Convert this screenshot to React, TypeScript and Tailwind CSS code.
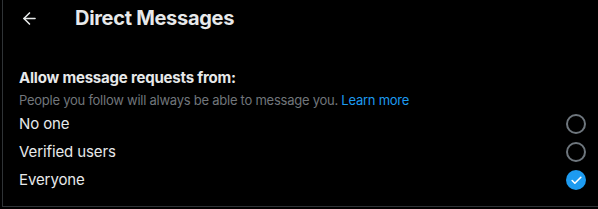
import { ArrowLeft, Check } from "lucide-react";

const OPTIONS = [
  { label: "No one", checked: false },
  { label: "Verified users", checked: false },
  { label: "Everyone", checked: true },
];

export default function App() {
  return (
    <div className="h-[209px] w-[598px] bg-black font-['Inter',sans-serif] text-[#e7e9ea]">
      <div className="ml-[2px] h-[207px] border-b border-l border-[#2f3336]">
        <div className="flex h-[36px] items-center pl-[17px]">
          <ArrowLeft size={19} strokeWidth={2} className="text-[#e7e9ea]" />
          <h2 className="ml-[36px] text-[20px] font-bold leading-6 tracking-[-0.3px]">Direct Messages</h2>
        </div>
        <div className="pl-[16px] pr-[12px] pt-[32px]">
          <p className="text-[15px] font-bold leading-5 tracking-[-0.2px]">Allow message requests from:</p>
          <p className="mt-[4px] text-[13px] leading-4 tracking-[-0.25px] text-[#71767b]">
            People you follow will always be able to message you.{" "}
            <span className="text-[#1d9bf0]">Learn more</span>
          </p>
          <div className="mt-[2px]">
            {OPTIONS.map((o) => (
              <div key={o.label} className="flex h-[28px] items-center justify-between">
                <span className="text-[15px] leading-5 tracking-[-0.1px]">{o.label}</span>
                {o.checked ? (
                  <span className="flex h-[20px] w-[20px] items-center justify-center rounded-full bg-[#1d9bf0]">
                    <Check size={13} strokeWidth={3} className="text-white" />
                  </span>
                ) : (
                  <span className="h-[20px] w-[20px] rounded-full border-2 border-[#6e767d]" />
                )}
              </div>
            ))}
          </div>
        </div>
      </div>
    </div>
  );
}
